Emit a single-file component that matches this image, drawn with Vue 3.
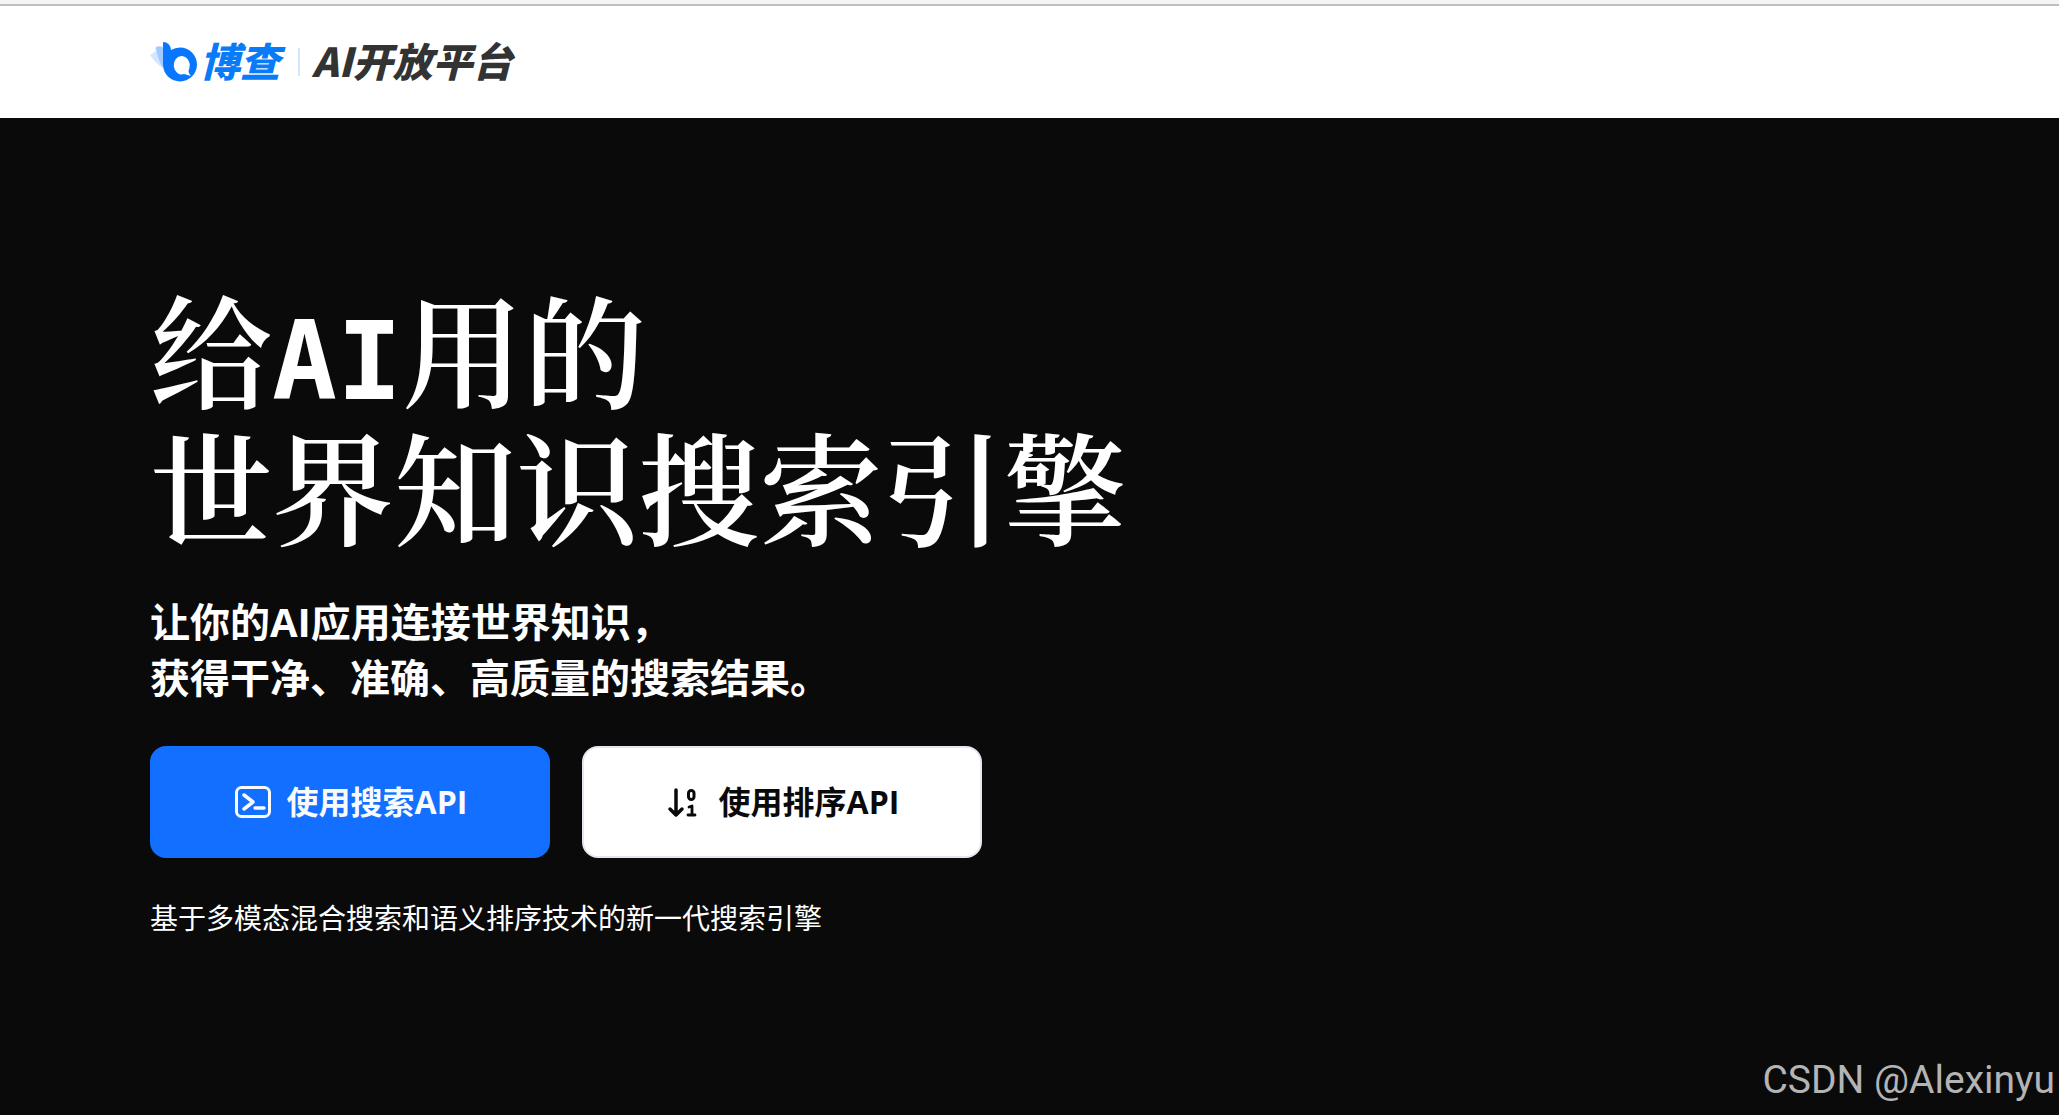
<script setup>
const intro = ['让你的AI应用连接世界知识，', '获得干净、准确、高质量的搜索结果。']
</script>

<template>
  <div class="page">
    <header class="header">
      <a class="brand" href="#" aria-label="博查 AI开放平台">
        <svg class="mark" viewBox="0 0 48 42" aria-hidden="true">
          <path d="M0 14 6 10Q4 7 6 6L13 5V27Q6 23 0 14Z" fill="#d3e6ff" />
          <path d="M6 6Q10 4 13 7V27Q7 17 6 6Z" fill="#a2caff" />
          <path
            fill="#0876ff"
            fill-rule="evenodd"
            d="M13 1Q20 1 21 9Q25 6.500 30 6.500A17 17 0 1 1 13 24ZM32 15A8 9.200 0 1 0 34 33L41 35Q37 31 39.500 27A8.500 9.500 0 0 0 32 15Z"
          />
        </svg>
        <span class="name">博查</span>
        <span class="divider"></span>
        <span class="platform">AI开放平台</span>
      </a>
    </header>

    <main class="hero">
      <h1 class="title">给<span class="latin">AI</span>用的<br />世界知识搜索引擎</h1>
      <p class="intro">
        <template v-for="(line, i) in intro" :key="line"><br v-if="i" />{{ line }}</template>
      </p>
      <div class="actions">
        <button class="button primary" type="button">
          <svg class="icon" viewBox="0 0 40 40" aria-hidden="true">
            <g fill="none" stroke="currentColor" stroke-width="3" stroke-linecap="round" stroke-linejoin="round">
              <rect x="3.500" y="5.500" width="33" height="29" rx="5" />
              <path d="m11 13 9 7-9 7M22 26h9" stroke-width="3.500" />
            </g>
          </svg>
          使用搜索API
        </button>
        <button class="button secondary" type="button">
          <svg class="icon" viewBox="0 0 40 40" aria-hidden="true">
            <g fill="none" stroke="currentColor" stroke-width="3.500" stroke-linecap="round" stroke-linejoin="round">
              <path d="M11 8v25M5 27l6 6 6-6" />
              <rect x="23.500" y="8.500" width="5.500" height="9" rx="2.700" stroke-width="3" />
              <path d="m24 25 3-1v9M23 33h7" stroke-width="2.800" />
            </g>
          </svg>
          使用排序API
        </button>
      </div>
      <p class="note">基于多模态混合搜索和语义排序技术的新一代搜索引擎</p>
      <span class="watermark">CSDN @Alexinyu</span>
    </main>
  </div>
</template>

<style>
body {
  margin: 0;
  background: #0a0a0a;
}
</style>

<style scoped>
.page {
  display: flex;
  flex-direction: column;
  min-height: 100vh;
  font-family: "Open Sans", "Noto Sans CJK SC", sans-serif;
  color: #fff;
}
.header {
  box-sizing: border-box;
  height: 118px;
  padding: 0 150px;
  display: flex;
  align-items: center;
  background: linear-gradient(#f5f5f5 4px, #c0c0c0 4px 6px, #fff 6px);
}
.brand {
  display: flex;
  align-items: center;
  height: 42px;
  padding-top: 6px;
  font: italic 900 40px/38px "Noto Sans CJK SC", sans-serif;
  text-decoration: none;
  white-space: nowrap;
}
.mark {
  width: 48px;
  height: 42px;
}
.name,
.platform {
  padding-bottom: 4px;
}
.name {
  margin-left: 2px;
  color: #087bf8;
}
.divider {
  width: 2px;
  height: 28px;
  margin: 0 12px 0 18px;
  background: #d3e6ff;
}
.platform {
  color: #333;
}
.hero {
  position: relative;
  flex: 1;
  padding: 160px 150px 0;
  background: #0a0a0a;
}
.title {
  margin: 0;
  font: 600 122px/137px "Noto Serif CJK SC", "Noto Sans CJK SC", serif;
}
.latin {
  font: 700 108px/100px "DejaVu Sans Mono", monospace;
}
.intro {
  margin: 42px 0 0;
  font-size: 40px;
  font-weight: 700;
  line-height: 56px;
}
.actions {
  display: flex;
  flex-wrap: wrap;
  gap: 32px;
  margin-top: 40px;
}
.button {
  box-sizing: border-box;
  width: 400px;
  height: 112px;
  padding: 0;
  display: flex;
  align-items: center;
  justify-content: center;
  gap: 14px;
  border: 2px solid #126fff;
  border-radius: 16px;
  font: 700 32px/48px "Open Sans", "Noto Sans CJK SC", sans-serif;
}
.primary {
  background: #126fff;
  color: #f8fafc;
}
.secondary {
  border-color: #e2e8f0;
  background: #fff;
  color: #0a0a0a;
}
.icon {
  width: 40px;
  height: 40px;
}
.note {
  margin: 40px 0 0;
  font-size: 28px;
  line-height: 40px;
}
.watermark {
  position: absolute;
  right: 4px;
  bottom: 12px;
  color: #b4b4b4;
  font: 39px/46px Roboto, sans-serif;
}
</style>
